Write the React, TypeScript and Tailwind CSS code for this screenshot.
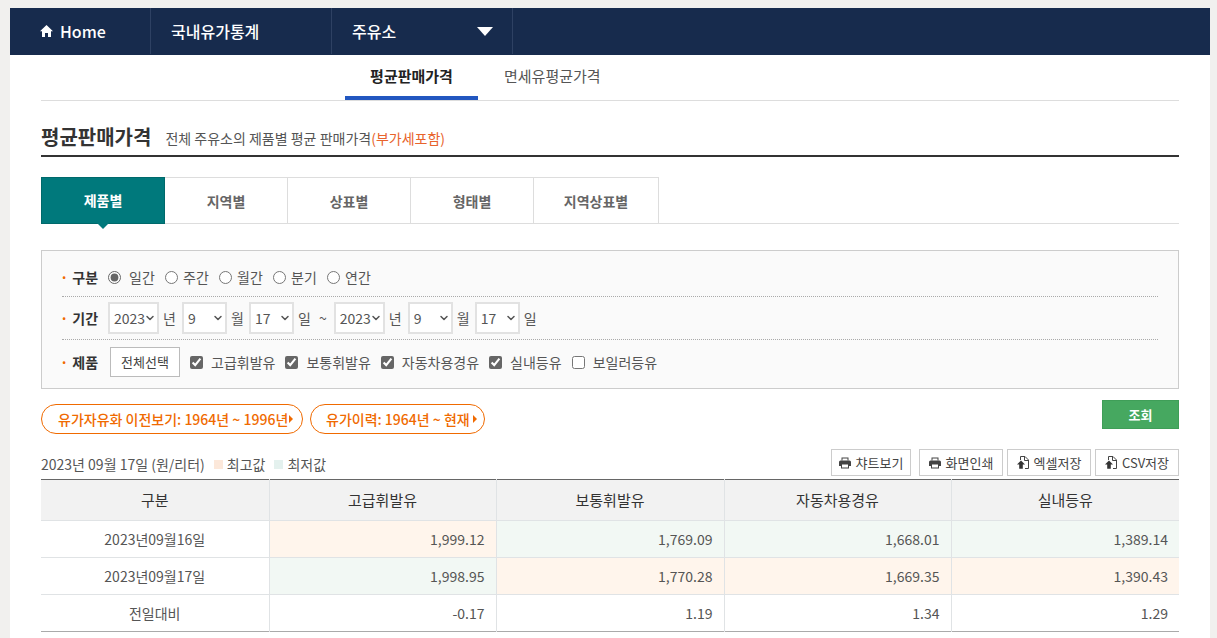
import React from 'react';
import { ChevronDown } from 'lucide-react';

const font = { fontFamily: '"Noto Sans CJK KR", "Noto Sans", sans-serif' };

const categoryTabs = ['제품별', '지역별', '상표별', '형태별', '지역상표별'];
const periods = ['일간', '주간', '월간', '분기', '연간'];
const products = [
  { label: '고급휘발유', checked: true },
  { label: '보통휘발유', checked: true },
  { label: '자동차용경유', checked: true },
  { label: '실내등유', checked: true },
  { label: '보일러등유', checked: false },
];

type Tone = 'high' | 'low' | 'none';
const rows: { label: string; cells: [string, Tone][] }[] = [
  { label: '2023년09월16일', cells: [['1,999.12', 'high'], ['1,769.09', 'low'], ['1,668.01', 'low'], ['1,389.14', 'low']] },
  { label: '2023년09월17일', cells: [['1,998.95', 'low'], ['1,770.28', 'high'], ['1,669.35', 'high'], ['1,390.43', 'high']] },
  { label: '전일대비', cells: [['-0.17', 'none'], ['1.19', 'none'], ['1.34', 'none'], ['1.29', 'none']] },
];

const HomeIcon = () => (
  <svg width="13" height="12" viewBox="0 0 13 12" fill="white">
    <path d="M6.5 0 13 6.2H11V12H8V8H5V12H2V6.2H0Z" />
  </svg>
);

const PrinterIcon = () => (
  <svg width="12" height="12" viewBox="0 0 12 12" fill="#444">
    <path d="M2.5 0.5H9.5V3.5H8.5V1.5H3.5V3.5H2.5Z" />
    <path fillRule="evenodd" d="M1.5 3.5H10.5Q12 3.5 12 5V9H10V11.5H2V9H0V5Q0 3.5 1.5 3.5ZM3 7.5V10.5H9V7.5Z" />
  </svg>
);

const SaveIcon = () => (
  <svg width="12" height="13" viewBox="0 0 12 13">
    <path d="M3.5 4V0.5H8L11.5 4V12.5H8" fill="none" stroke="#444" />
    <path d="M7.5 0.5V4.5H11.5" fill="none" stroke="#444" />
    <path d="M4 4.5 8 8.5H5.8V12.8H2.2V8.5H0Z" fill="#333" />
  </svg>
);

const DateSelect = ({ value, width }: { value: string; width: string }) => (
  <div className={`relative ${width} h-[32px]`}>
    <select
      defaultValue={value}
      className="h-full w-full appearance-none border-2 border-[#e2e2e2] bg-white pl-[4px] text-[14px] text-[#555]"
    >
      <option>{value}</option>
    </select>
    <ChevronDown size={12} strokeWidth={3} className="pointer-events-none absolute right-[3px] top-[10px] text-[#555]" />
  </div>
);

const DateGroup = ({ last }: { last?: boolean }) => (
  <>
    <DateSelect value="2023" width="w-[51px]" />
    <span className="ml-[4px] mr-[5px] w-[14px]">년</span>
    <DateSelect value="9" width="w-[45px]" />
    <span className="ml-[4px] mr-[4px] w-[14px]">월</span>
    <DateSelect value="17" width="w-[45px]" />
    <span className="ml-[4px]">일</span>
    {!last && <span className="ml-[8px] mr-[7px]">~</span>}
  </>
);

const FieldLabel = ({ text }: { text: string }) => (
  <div className="flex w-[46px] shrink-0 items-center text-[14px] font-bold text-[#333]">
    <span className="-ml-[2px] mr-[4px] text-[#f06a00]">·</span>
    {text}
  </div>
);

const PillArrow = () => <span className="ml-[1px] h-0 w-0 border-y-[4px] border-l-[4px] border-y-transparent border-l-[#f06a00]" />;

const toolButton = 'flex h-[27px] items-center justify-center gap-[5px] border border-[#ccc] bg-white';

const App: React.FC = () => {
  return (
    <div className="h-[638px] overflow-hidden bg-[#f1f0ee] pl-[10px] pt-[8px]" style={font}>
      <div className="h-[630px] w-[1200px] bg-white">
        {/* top navigation */}
        <nav className="flex h-[47px] bg-[#172b4d] pb-[1px] text-[16px] font-medium text-white">
          <div className="flex w-[141px] items-center gap-[7px] border-r border-[#2e4163] pl-[30px]">
            <HomeIcon />
            Home
          </div>
          <div className="flex w-[181px] items-center border-r border-[#2e4163] pl-[20px]">국내유가통계</div>
          <div className="flex w-[181px] items-center justify-between border-r border-[#2e4163] pl-[20px] pr-[19px]">
            주유소
            <span className="h-0 w-0 border-x-[8px] border-t-[9px] border-x-transparent border-t-white" />
          </div>
        </nav>

        <div className="px-[31px]">
          {/* sub tabs */}
          <div className="flex h-[46px] border-b border-[#ddd] pl-[304px] text-[15px]">
            <div className="flex h-[45px] w-[133px] items-center justify-center border-b-4 border-[#2257c0] pt-[1px] font-bold text-[#222]">
              평균판매가격
            </div>
            <div className="flex h-[45px] items-center pb-[3px] pl-[26px] text-[#555]">면세유평균가격</div>
          </div>

          {/* title */}
          <div className="mt-[20px] flex h-[36px] items-center border-b-2 border-[#333] pb-[2px]">
            <h2 className="text-[20px] font-bold text-[#333]">평균판매가격</h2>
            <p className="ml-[14px] pt-[3px] text-[14px] text-[#555]">
              전체 주유소의 제품별 평균 판매가격<span className="text-[#e8632c]">(부가세포함)</span>
            </p>
          </div>

          {/* category tabs */}
          <div className="mt-[20px] flex h-[47px] border-b border-[#ddd]">
            {categoryTabs.map((tab, i) => (
              <div
                key={tab}
                className={
                  i === 0
                    ? 'relative flex h-[47px] w-[124px] items-center justify-center border border-[#00696b] bg-[#00797c] text-[14px] font-bold text-white'
                    : `flex h-[47px] ${i === 4 ? 'w-[125px]' : 'w-[123px]'} items-center justify-center border-r border-t border-[#ddd] text-[14px] font-bold text-[#666]`
                }
              >
                {tab}
                {i === 0 && (
                  <span className="absolute left-1/2 top-full h-0 w-0 -translate-x-1/2 border-x-[6px] border-t-[6px] border-x-transparent border-t-[#00797c]" />
                )}
              </div>
            ))}
          </div>

          {/* search form */}
          <div className="mt-[26px] h-[139px] border border-[#ccc] bg-[#fafafa] text-[14px] text-[#555]">
            <div className="ml-[20px] mr-[20px] flex h-[46px] items-center border-b border-dotted border-[#aaa] pt-[8px]">
              <FieldLabel text="구분" />
              <div className="flex items-center">
                {periods.map((p, i) => (
                  <label key={p} className={`flex items-center ${i === 0 ? 'w-[57px]' : 'w-[54px]'}`}>
                    <input type="radio" name="period" defaultChecked={i === 0} className={`m-0 h-[13px] w-[13px] accent-[#666] ${i === 0 ? 'mr-[8px]' : 'mr-[5px]'}`} />
                    {p}
                  </label>
                ))}
              </div>
            </div>
            <div className="ml-[20px] mr-[20px] flex h-[43px] items-center border-b border-dotted border-[#aaa]">
              <FieldLabel text="기간" />
              <DateGroup />
              <DateGroup last />
            </div>
            <div className="ml-[20px] flex h-[44px] items-center">
              <FieldLabel text="제품" />
              <button className="ml-[2px] h-[30px] w-[70px] border border-[#bbb] bg-white text-[13px] text-[#444]">전체선택</button>
              <div className="ml-[10px] flex items-center">
                {products.map((item) => (
                  <label key={item.label} className="mr-[10px] flex items-center">
                    <input type="checkbox" defaultChecked={item.checked} className="m-0 mr-[8px] h-[13px] w-[13px] accent-[#666]" />
                    {item.label}
                  </label>
                ))}
              </div>
            </div>
          </div>

          {/* history links + search */}
          <div className="mt-[11px] flex items-start justify-between">
            <div className="mt-[4px] flex gap-[7px] text-[14px] font-medium text-[#f06a00]">
              <a className="flex h-[30px] w-[262px] items-center rounded-full border border-[#f06a00] pl-[16px]">
                유가자유화 이전보기: 1964년 ~ 1996년
                <PillArrow />
              </a>
              <a className="flex h-[30px] w-[175px] items-center gap-[2px] rounded-full border border-[#f06a00] pl-[15px]">
                유가이력: 1964년 ~ 현재
                <PillArrow />
              </a>
            </div>
            <button className="h-[29px] w-[77px] border border-[#3f9e58] bg-[#46a860] text-[13px] font-bold text-white">조회</button>
          </div>

          {/* table toolbar */}
          <div className="mt-[15px] flex h-[27px] items-end justify-between">
            <div className="flex items-center pb-[1px] text-[14px] text-[#555]">
              2023년 09월 17일 (원/리터)
              <span className="ml-[9px] mr-[4px] h-[9px] w-[9px] bg-[#fce8da]" />
              최고값
              <span className="ml-[9px] mr-[4px] h-[9px] w-[9px] bg-[#e4f1ee]" />
              최저값
            </div>
            <div className="flex gap-[4px] text-[13px] text-[#444]">
              <button className={`mr-[4px] w-[80px] ${toolButton}`}>
                <PrinterIcon />
                챠트보기
              </button>
              <button className={`w-[84px] ${toolButton}`}>
                <PrinterIcon />
                화면인쇄
              </button>
              <button className={`w-[84px] ${toolButton}`}>
                <SaveIcon />
                엑셀저장
              </button>
              <button className={`w-[84px] ${toolButton}`}>
                <SaveIcon />
                CSV저장
              </button>
            </div>
          </div>

          {/* price table */}
          <table className="mt-[3px] w-[1138px] table-fixed border-collapse border-b border-t border-b-[#aaa] border-t-[#666] text-[14px] text-[#555]">
            <colgroup>
              <col className="w-[228px]" />
              <col className="w-[227px]" />
              <col className="w-[228px]" />
              <col className="w-[227px]" />
              <col className="w-[228px]" />
            </colgroup>
            <thead>
              <tr className="h-[41px] bg-[#f2f2f2] text-[15px] text-[#333]">
                {['구분', '고급휘발유', '보통휘발유', '자동차용경유', '실내등유'].map((h, i) => (
                  <th key={h} className={`border-b border-[#e0e3e5] font-normal ${i < 4 ? 'border-r' : ''}`}>
                    {h}
                  </th>
                ))}
              </tr>
            </thead>
            <tbody>
              {rows.map((row, r) => (
                <tr key={row.label} className="h-[37px]">
                  <td className={`border-r border-[#e0e3e5] text-center ${r < 2 ? 'border-b' : ''}`}>{row.label}</td>
                  {row.cells.map(([val, tone], i) => (
                    <td
                      key={i}
                      className={`border-[#e0e3e5] pr-[11px] text-right ${r < 2 ? 'border-b' : ''} ${i < 3 ? 'border-r' : ''} ${
                        tone === 'high' ? 'bg-[#fff5ec]' : tone === 'low' ? 'bg-[#f2f8f4]' : ''
                      }`}
                    >
                      {val}
                    </td>
                  ))}
                </tr>
              ))}
            </tbody>
          </table>
        </div>
      </div>
    </div>
  );
};

export default App;
